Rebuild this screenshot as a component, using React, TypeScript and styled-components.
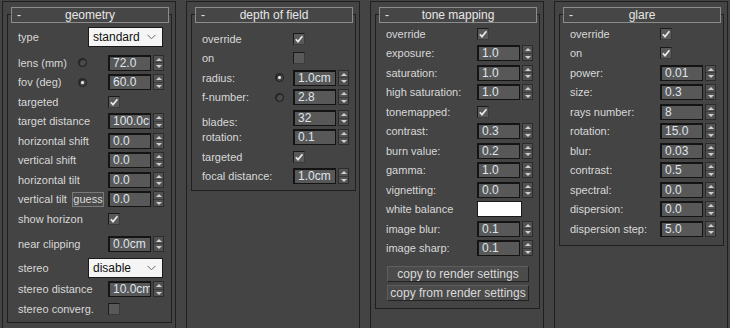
import React from 'react'
import styled, { createGlobalStyle } from 'styled-components'

const GlobalStyle = createGlobalStyle`
  html, body {
    margin: 0;
    padding: 0;
    background: #444444;
  }
  body {
    font-family: "Liberation Sans", Arial, sans-serif;
  }
`

const Page = styled.div`
  display: flex;
  gap: 10px;
  width: 730px;
  height: 328px;
  padding: 1px 0 0 2px;
  box-sizing: border-box;
  overflow: hidden;
  background: #444444;
`

const Column = styled.div`
  flex: none;
  width: 174px;
  box-sizing: border-box;
  border: 1px solid #1f1f1f;
  border-bottom: none;
  padding: 5px 3px 0 4px;
`

const Header = styled.div`
  position: relative;
  z-index: 1;
  display: grid;
  grid-template-columns: 20px 1fr 20px;
  align-items: center;
  height: 16px;
  box-sizing: border-box;
  margin: 0 3px 0 4px;
  border: 1px solid #8c8c8c;
  background: #464646;
  color: #e6e6e6;
  font-size: 12px;
`

const Minus = styled.span`
  padding-left: 5px;
  font-size: 12px;
`

const Title = styled.span`
  text-align: center;
`

const Body = styled.div<{ $pt: number; $pb: number; $split: number }>`
  --split: ${(p) => p.$split}px;
  display: flex;
  flex-direction: column;
  margin-top: -9px;
  border: 1px solid #1f1f1f;
  padding: ${(p) => p.$pt}px 0 ${(p) => p.$pb}px;
`

const Row = styled.div<{ $h?: number; $mt?: number; $split?: number }>`
  display: grid;
  grid-template-columns: ${(p) => (p.$split ? `${p.$split}px` : 'var(--split)')} auto;
  align-items: center;
  height: ${(p) => p.$h ?? 19.5}px;
  margin-top: ${(p) => p.$mt ?? 0}px;
  padding-left: 10px;
`

const Label = styled.div<{ $drop?: number }>`
  display: flex;
  align-items: center;
  justify-content: space-between;
  padding-top: ${(p) => p.$drop ?? 0}px;
  color: #d8d8d8;
  font-size: 11px;
  white-space: nowrap;
`

const Controls = styled.div`
  display: flex;
  align-items: center;
  gap: 2px;
`

const Field = styled.div`
  width: 43px;
  height: 16px;
  box-sizing: border-box;
  padding: 0 0 0 3px;
  border: 1px solid #141414;
  border-top-width: 2px;
  border-left-width: 2px;
  background: #585858;
  color: #dfe5ec;
  font-size: 12px;
  line-height: 13px;
  white-space: nowrap;
  overflow: hidden;
`

const Spinner = styled.div`
  display: flex;
  flex-direction: column;
  width: 11px;
  height: 16px;
  box-sizing: border-box;
  border: 1px solid #2c2c2c;
  background: #525252;
`

const SpinHalf = styled.div<{ $down?: boolean }>`
  flex: 1;
  display: flex;
  align-items: center;
  justify-content: center;
  border-top: ${(p) => (p.$down ? '1px solid #3a3a3a' : 'none')};
  &::after {
    content: '';
    border-left: 3px solid transparent;
    border-right: 3px solid transparent;
    ${(p) => (p.$down ? 'border-top: 3px solid #cfcfcf;' : 'border-bottom: 3px solid #cfcfcf;')}
  }
`

const Box = styled.div`
  display: flex;
  align-items: center;
  justify-content: center;
  width: 12px;
  height: 12px;
  box-sizing: border-box;
  border: 1px solid #1a1a1a;
  border-right-color: #3c3c3c;
  border-bottom-color: #3c3c3c;
  background: #595959;
`

const RadioRing = styled.span<{ $inset: number; $on?: boolean }>`
  position: relative;
  display: inline-block;
  width: 9px;
  height: 9px;
  margin-right: ${(p) => p.$inset}px;
  box-sizing: border-box;
  border-radius: 50%;
  border: 1px solid #1c1c1c;
  background: #4a4a4a;
  box-shadow: inset 1px 1px 0 #2a2a2a;
  &::after {
    content: '';
    display: ${(p) => (p.$on ? 'block' : 'none')};
    position: absolute;
    left: 2px;
    top: 2px;
    width: 3px;
    height: 3px;
    border-radius: 50%;
    background: #f2f2f2;
  }
`

const Dropdown = styled.div`
  display: flex;
  align-items: center;
  justify-content: space-between;
  width: 75px;
  height: 20px;
  box-sizing: border-box;
  padding: 0 6px 0 4px;
  border: 1px solid #1a1a1a;
  background: #f5f5f5;
  color: #111111;
  font-size: 12px;
`

const Guess = styled.span`
  display: inline-flex;
  align-items: center;
  justify-content: center;
  width: 32px;
  height: 15px;
  margin-right: 4px;
  box-sizing: border-box;
  border: 1px solid #7a7a7a;
  background: #4a4a4a;
  color: #dcdcdc;
  font-size: 11px;
`

const Swatch = styled.div`
  width: 45px;
  height: 16px;
  box-sizing: border-box;
  border: 1px solid #1a1a1a;
  background: #ffffff;
`

const ButtonStack = styled.div`
  display: flex;
  flex-direction: column;
  gap: 3px;
  margin: 8px 10px 0 11px;
`

const Button = styled.div`
  display: flex;
  align-items: center;
  justify-content: center;
  height: 16px;
  box-sizing: border-box;
  border: 1px solid #222222;
  border-top-color: #5e5e5e;
  border-left-color: #5e5e5e;
  background: #4b4b4b;
  color: #dadada;
  font-size: 12px;
`

const Num = ({ value }: { value: string }) => (
  <Controls>
    <Field>{value}</Field>
    <Spinner>
      <SpinHalf />
      <SpinHalf $down />
    </Spinner>
  </Controls>
)

const Check = ({ on }: { on?: boolean }) => (
  <Box>
    {on && (
      <svg width="10" height="10" viewBox="0 0 10 10">
        <path d="M1.8 5.2 L4 7.6 L8.4 2.2" fill="none" stroke="#e8e8e8" strokeWidth="1.7" />
      </svg>
    )}
  </Box>
)

const Chevron = () => (
  <svg width="9" height="6" viewBox="0 0 9 6">
    <path d="M0.5 0.8 L4.5 4.8 L8.5 0.8" fill="none" stroke="#6a6a6a" strokeWidth="1" />
  </svg>
)

const Rollout = ({ title, children }: { title: string; children: React.ReactNode }) => (
  <>
    <Header>
      <Minus>-</Minus>
      <Title>{title}</Title>
      <span />
    </Header>
    {children}
  </>
)

export default function App() {
  return (
    <>
      <GlobalStyle />
      <Page>
        <Column>
          <Rollout title="geometry">
            <Body $pt={11} $pb={3} $split={90}>
              <Row $h={22} $split={70}>
                <Label>type</Label>
                <Dropdown>
                  standard
                  <Chevron />
                </Dropdown>
              </Row>
              <Row $mt={5}>
                <Label>
                  lens (mm) <RadioRing $inset={21} />
                </Label>
                <Num value="72.0" />
              </Row>
              <Row>
                <Label>
                  fov (deg) <RadioRing $inset={21} $on />
                </Label>
                <Num value="60.0" />
              </Row>
              <Row>
                <Label>targeted</Label>
                <Check on />
              </Row>
              <Row>
                <Label>target distance</Label>
                <Num value="100.0cm" />
              </Row>
              <Row>
                <Label>horizontal shift</Label>
                <Num value="0.0" />
              </Row>
              <Row>
                <Label>vertical shift</Label>
                <Num value="0.0" />
              </Row>
              <Row>
                <Label>horizontal tilt</Label>
                <Num value="0.0" />
              </Row>
              <Row>
                <Label>
                  vertical tilt <Guess>guess</Guess>
                </Label>
                <Num value="0.0" />
              </Row>
              <Row>
                <Label>show horizon</Label>
                <Check on />
              </Row>
              <Row $mt={5.5}>
                <Label>near clipping</Label>
                <Num value="0.0cm" />
              </Row>
              <Row $h={22} $mt={3} $split={70}>
                <Label>stereo</Label>
                <Dropdown>
                  disable
                  <Chevron />
                </Dropdown>
              </Row>
              <Row $mt={1}>
                <Label>stereo distance</Label>
                <Num value="10.0cm" />
              </Row>
              <Row>
                <Label>stereo converg.</Label>
                <Check />
              </Row>
            </Body>
          </Rollout>
        </Column>

        <Column>
          <Rollout title="depth of field">
            <Body $pt={14} $pb={4} $split={91}>
              <Row>
                <Label>override</Label>
                <Check on />
              </Row>
              <Row>
                <Label>on</Label>
                <Check />
              </Row>
              <Row>
                <Label>
                  radius: <RadioRing $inset={9} $on />
                </Label>
                <Num value="1.0cm" />
              </Row>
              <Row>
                <Label>
                  f-number: <RadioRing $inset={9} />
                </Label>
                <Num value="2.8" />
              </Row>
              <Row $mt={1}>
                <Label $drop={8}>blades:</Label>
                <Num value="32" />
              </Row>
              <Row>
                <Label>rotation:</Label>
                <Num value="0.1" />
              </Row>
              <Row>
                <Label>targeted</Label>
                <Check on />
              </Row>
              <Row>
                <Label>focal distance:</Label>
                <Num value="1.0cm" />
              </Row>
            </Body>
          </Rollout>
        </Column>

        <Column>
          <Rollout title="tone mapping">
            <Body $pt={9} $pb={7} $split={91}>
              <Row>
                <Label>override</Label>
                <Check on />
              </Row>
              <Row>
                <Label>exposure:</Label>
                <Num value="1.0" />
              </Row>
              <Row>
                <Label>saturation:</Label>
                <Num value="1.0" />
              </Row>
              <Row>
                <Label>high saturation:</Label>
                <Num value="1.0" />
              </Row>
              <Row>
                <Label>tonemapped:</Label>
                <Check on />
              </Row>
              <Row>
                <Label>contrast:</Label>
                <Num value="0.3" />
              </Row>
              <Row>
                <Label>burn value:</Label>
                <Num value="0.2" />
              </Row>
              <Row>
                <Label>gamma:</Label>
                <Num value="1.0" />
              </Row>
              <Row>
                <Label>vignetting:</Label>
                <Num value="0.0" />
              </Row>
              <Row>
                <Label>white balance</Label>
                <Swatch />
              </Row>
              <Row>
                <Label>image blur:</Label>
                <Num value="0.1" />
              </Row>
              <Row>
                <Label>image sharp:</Label>
                <Num value="0.1" />
              </Row>
              <ButtonStack>
                <Button>copy to render settings</Button>
                <Button>copy from render settings</Button>
              </ButtonStack>
            </Body>
          </Rollout>
        </Column>

        <Column>
          <Rollout title="glare">
            <Body $pt={9} $pb={6} $split={90}>
              <Row>
                <Label>override</Label>
                <Check on />
              </Row>
              <Row>
                <Label>on</Label>
                <Check on />
              </Row>
              <Row>
                <Label>power:</Label>
                <Num value="0.01" />
              </Row>
              <Row>
                <Label>size:</Label>
                <Num value="0.3" />
              </Row>
              <Row>
                <Label>rays number:</Label>
                <Num value="8" />
              </Row>
              <Row>
                <Label>rotation:</Label>
                <Num value="15.0" />
              </Row>
              <Row>
                <Label>blur:</Label>
                <Num value="0.03" />
              </Row>
              <Row>
                <Label>contrast:</Label>
                <Num value="0.5" />
              </Row>
              <Row>
                <Label>spectral:</Label>
                <Num value="0.0" />
              </Row>
              <Row>
                <Label>dispersion:</Label>
                <Num value="0.0" />
              </Row>
              <Row>
                <Label>dispersion step:</Label>
                <Num value="5.0" />
              </Row>
            </Body>
          </Rollout>
        </Column>
      </Page>
    </>
  )
}
